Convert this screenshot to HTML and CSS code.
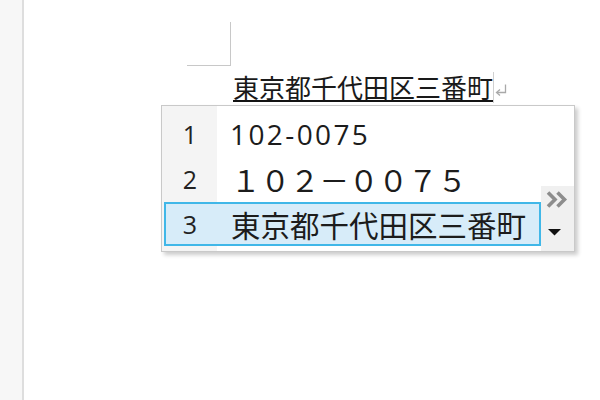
FILE: index.html
```html
<!DOCTYPE html>
<html lang="ja">
<head>
<meta charset="utf-8">
<title>IME</title>
<link rel="stylesheet" href="styles.css">
</head>
<body>
<div class="app">
  <aside class="gutter"></aside>
  <main class="doc">
    <div class="corner"></div>
    <div class="line">
      <span class="typed">東京都千代田区三番町</span><span class="caret"></span><svg class="ret" width="12" height="13" viewBox="0 0 12 13"><path d="M10.5 0.5 V8.5 H2" fill="none" stroke="#a9a9a9" stroke-width="1.3"/><path d="M5 5.5 L1.5 8.5 L5 11.5" fill="none" stroke="#a9a9a9" stroke-width="1.3"/></svg>
    </div>
    <div class="ime">
      <div class="list">
        <div class="row"><span class="num">1</span><span class="cand latin">102-0075</span></div>
        <div class="row"><span class="num">2</span><span class="cand">１０２－００７５</span></div>
        <div class="row sel"><span class="num">3</span><span class="cand">東京都千代田区三番町</span></div>
      </div>
      <div class="side">
        <div class="pager">
          <svg class="more" width="22" height="17" viewBox="0 0 22 17"><path d="M2 1.5 L9 8.5 L2 15.5 M11.5 1.5 L18.5 8.5 L11.5 15.5" fill="none" stroke="#8d8d8d" stroke-width="3.6"/></svg>
          <svg class="down" width="13" height="7" viewBox="0 0 13 7"><polygon points="0,0 13,0 6.5,6.5" fill="#111"/></svg>
        </div>
      </div>
    </div>
  </main>
</div>
</body>
</html>
```

FILE: styles.css
```css
html, body {
  margin: 0;
  padding: 0;
  background: #ffffff;
}
body {
  width: 600px;
  height: 400px;
  overflow: hidden;
  font-family: "Noto Sans CJK JP", "Noto Sans", sans-serif;
  color: #1f1f1f;
}
.app {
  display: flex;
  height: 400px;
}
.gutter {
  flex: 0 0 22px;
  background: #f7f7f7;
  border-right: 2px solid #dedede;
}
.doc {
  flex: 1;
  position: relative;
  padding-top: 22px;
}
.corner {
  box-sizing: border-box;
  margin-left: 163px;
  width: 44px;
  height: 44px;
  border-right: 1px solid #c8c8c8;
  border-bottom: 1px solid #c8c8c8;
}
.line {
  display: flex;
  align-items: flex-start;
  margin-left: 209px;
  margin-top: 7px;
}
.typed {
  display: inline-block;
  font-size: 26px;
  line-height: 27px;
  border-bottom: 2px solid #141414;
  color: #1a1a1a;
}
.caret {
  width: 1px;
  height: 31px;
  margin-top: -1px;
  background: #d0d0d0;
}
.ret {
  margin-top: 11px;
  margin-left: 1px;
}
.ime {
  position: absolute;
  left: 137px;
  top: 105px;
  width: 414px;
  height: 147px;
  box-sizing: border-box;
  border: 1px solid #c9c9c9;
  background: #ffffff;
  box-shadow: 3px 3px 4px rgba(0, 0, 0, 0.2);
  display: flex;
}
.list {
  flex: 0 0 379px;
  box-sizing: border-box;
  padding: 6px 0 0 2px;
  background: linear-gradient(to right, #f4f4f4 0, #f4f4f4 55px, #ffffff 55px);
  display: flex;
  flex-direction: column;
  gap: 1px;
}
.row {
  box-sizing: border-box;
  width: 377px;
  height: 44px;
  border: 2px solid transparent;
  display: flex;
  align-items: center;
}
.row.sel {
  border-color: #40b7e8;
  background: #d7ecf9;
}
.num {
  flex: 0 0 48px;
  text-align: center;
  font-family: "Open Sans", "Noto Sans", sans-serif;
  font-size: 25px;
  color: #222222;
}
.cand {
  padding-left: 17px;
  font-size: 29.5px;
  line-height: 40px;
  color: #1c1c1c;
  white-space: nowrap;
}
.cand.latin {
  font-family: "Open Sans", "Noto Sans", sans-serif;
  font-size: 28px;
  letter-spacing: 2.4px;
  padding-left: 16px;
}
.side {
  flex: 1;
  display: flex;
  flex-direction: column;
  justify-content: flex-end;
}
.pager {
  height: 65px;
  background: #f0f0f0;
  display: flex;
  flex-direction: column;
  align-items: flex-start;
  padding-top: 5px;
  box-sizing: border-box;
}
.more {
  margin-left: 5px;
}
.down {
  margin-left: 7px;
  margin-top: 21px;
}
```
